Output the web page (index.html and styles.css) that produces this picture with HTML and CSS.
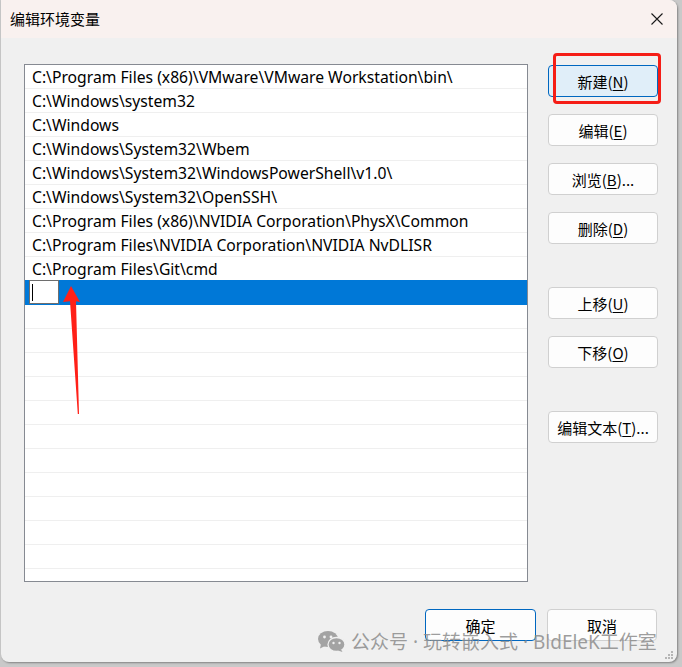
FILE: index.html
```html
<!DOCTYPE html>
<html><head><meta http-equiv="Content-Type" content="text/html; charset=UTF-8">
	<meta name="viewport" content="width=device-width, initial-scale=1">
	<title>编辑环境变量</title>
	<link rel="stylesheet" href="styles.css">
</head>
<body>
<div class="dialog">
	<div class="titlebar">
		<span class="title">编辑环境变量</span>
		<svg class="close" width="12" height="12" viewBox="0 0 12 12"><path d="M0.5 0.5L11.5 11.5M11.5 0.5L0.5 11.5" stroke="#1a1a1a" stroke-width="1.1" fill="none"/></svg>
	</div>
	<div class="body">
		<div class="list">
			<div class="row">C:\Program Files (x86)\VMware\VMware Workstation\bin\</div>
			<div class="row">C:\Windows\system32</div>
			<div class="row">C:\Windows</div>
			<div class="row">C:\Windows\System32\Wbem</div>
			<div class="row">C:\Windows\System32\WindowsPowerShell\v1.0\</div>
			<div class="row">C:\Windows\System32\OpenSSH\</div>
			<div class="row">C:\Program Files (x86)\NVIDIA Corporation\PhysX\Common</div>
			<div class="row">C:\Program Files\NVIDIA Corporation\NVIDIA NvDLISR</div>
			<div class="row">C:\Program Files\Git\cmd</div>
			<div class="row selected"><span class="editbox"><i class="caret"></i></span></div>
			<div class="row"></div>
			<div class="row"></div>
			<div class="row"></div>
			<div class="row"></div>
			<div class="row"></div>
			<div class="row"></div>
			<div class="row"></div>
			<div class="row"></div>
			<div class="row"></div>
			<div class="row"></div>
			<div class="row"></div>
			<div class="row"></div>
		</div>
		<div class="side">
			<button type="button" class="btn primary hover">新建(<u>N</u>)</button>
			<button type="button" class="btn">编辑(<u>E</u>)</button>
			<button type="button" class="btn">浏览(<u>B</u>)...</button>
			<button type="button" class="btn">删除(<u>D</u>)</button>
			<button type="button" class="btn group">上移(<u>U</u>)</button>
			<button type="button" class="btn">下移(<u>O</u>)</button>
			<button type="button" class="btn group">编辑文本(<u>T</u>)...</button>
		</div>
	</div>
	<div class="footer">
		<button type="button" class="btn primary wide">确定</button>
		<button type="button" class="btn">取消</button>
	</div>

	<!-- annotations on top of the screenshot -->
	<div class="red-box"></div>
	<svg class="arrow" width="24" height="132" viewBox="0 0 24 132">
		<path d="M11 0L20 16L16 15.2L19 128L17.8 128L10 15.2L3 16Z" fill="#ff2018"/>
	</svg>
	<div class="watermark">
		<svg class="wechat" width="27" height="21" viewBox="0 0 27 21">
			<ellipse cx="10" cy="8" rx="10" ry="8" fill="#a3a3a3"/>
			<path d="M3 13L2 17.5L7 15Z" fill="#a3a3a3"/>
			<circle cx="6.5" cy="6" r="1.4" fill="#f0f0f0"/>
			<circle cx="13" cy="6" r="1.4" fill="#f0f0f0"/>
			<ellipse cx="18.5" cy="13.5" rx="8.5" ry="7" fill="#a3a3a3" stroke="#f0f0f0" stroke-width="1.3"/>
			<path d="M23 18.5L24.5 21L20 19.5Z" fill="#a3a3a3"/>
			<circle cx="15.5" cy="12" r="1.2" fill="#f0f0f0"/>
			<circle cx="21.5" cy="12" r="1.2" fill="#f0f0f0"/>
		</svg>
		<span>公众号 · 玩转嵌入式 · BldEleK工作室</span>
	</div>
	<svg class="grip" width="10" height="10" viewBox="0 0 10 10">
		<rect x="7" y="1" width="2" height="2" fill="#b5b5b5"/>
		<rect x="4" y="4" width="2" height="2" fill="#b5b5b5"/>
		<rect x="7" y="4" width="2" height="2" fill="#b5b5b5"/>
		<rect x="1" y="7" width="2" height="2" fill="#b5b5b5"/>
		<rect x="4" y="7" width="2" height="2" fill="#b5b5b5"/>
		<rect x="7" y="7" width="2" height="2" fill="#b5b5b5"/>
	</svg>
</div>
</body></html>
```

FILE: styles.css
```css
body{
	margin: 0;
	background: #c9c9c9;
	width: 682px;
	height: 667px;
	overflow: hidden;
}
.dialog{
	position: relative;
	width: 676px;
	height: 662px;
	margin-left: 1px;
	background: #f0f0f0;
	border-radius: 0 8px 8px 8px;
	box-shadow: 1px 1px 2px rgba(0,0,0,0.35);
	display: flex;
	flex-direction: column;
	overflow: hidden;
	font-family: "Noto Sans", "Noto Sans CJK SC", sans-serif;
	color: #000;
}
.titlebar{
	height: 38px;
	flex: none;
	background: #f9f1ef;
	display: flex;
	align-items: center;
	justify-content: space-between;
	padding: 0 14px 0 9px;
}
.title{
	font-family: "Noto Sans CJK SC", sans-serif;
	font-size: 15px;
	margin-top: -1px;
}
.body{
	display: flex;
	padding: 26px 20px 0 23px;
}
.list{
	width: 502px;
	height: 516px;
	border: 1px solid #868a92;
	background: #fff;
	overflow: hidden;
	flex: none;
}
.row{
	height: 23px;
	border-bottom: 1px solid #efefef;
	padding-left: 7px;
	font-size: 15.7px;
	line-height: 23px;
	white-space: nowrap;
	display: flex;
	align-items: center;
	padding-top: 1px;
	box-sizing: border-box;
	height: 24px;
}
.row.selected{
	background: #0078d7;
	border-bottom-color: #0078d7;
	padding: 0 0 0 4px;
	height: 25px;
	margin-top: -1px;
}
.editbox{
	width: 26px;
	height: 22px;
	border: 1px solid #6e6e6e;
	background: #fff;
	display: flex;
	align-items: center;
	padding-left: 2px;
}
.caret{
	width: 1px;
	height: 17px;
	background: #000;
}
.side{
	display: flex;
	flex-direction: column;
	margin-left: 20px;
	padding-top: 1px;
}
.btn{
	width: 110px;
	height: 32px;
	border: 1px solid #d0d0d0;
	border-radius: 4px;
	background: #fdfdfd;
	font-family: "Noto Sans CJK SC", sans-serif;
	font-size: 15px;
	color: #000;
	padding: 0;
	margin-bottom: 17px;
}
.btn u{
	text-underline-offset: 2px;
}
.btn.group{
	margin-top: 26px;
}
.btn.primary{
	border-color: #0067c0;
}
.btn.hover{
	background: #e0eef9;
}
.btn.wide{
	width: 111px;
}
.footer{
	display: flex;
	justify-content: flex-end;
	gap: 11px;
	padding: 27px 20px 0 0;
}
.footer .btn{
	margin-bottom: 0;
}
.red-box{
	position: absolute;
	left: 552px;
	top: 53px;
	width: 102px;
	height: 45px;
	border: 3px solid #f51d16;
	border-radius: 4px;
}
.arrow{
	position: absolute;
	left: 59px;
	top: 286px;
}
.watermark{
	position: absolute;
	left: 317px;
	top: 627px;
	display: flex;
	align-items: center;
	gap: 6px;
	font-family: "Noto Sans", "Noto Sans CJK SC", sans-serif;
	font-size: 19px;
	color: rgba(140,140,140,0.85);
	white-space: nowrap;
}
.grip{
	position: absolute;
	right: 3px;
	bottom: 2px;
}
```
